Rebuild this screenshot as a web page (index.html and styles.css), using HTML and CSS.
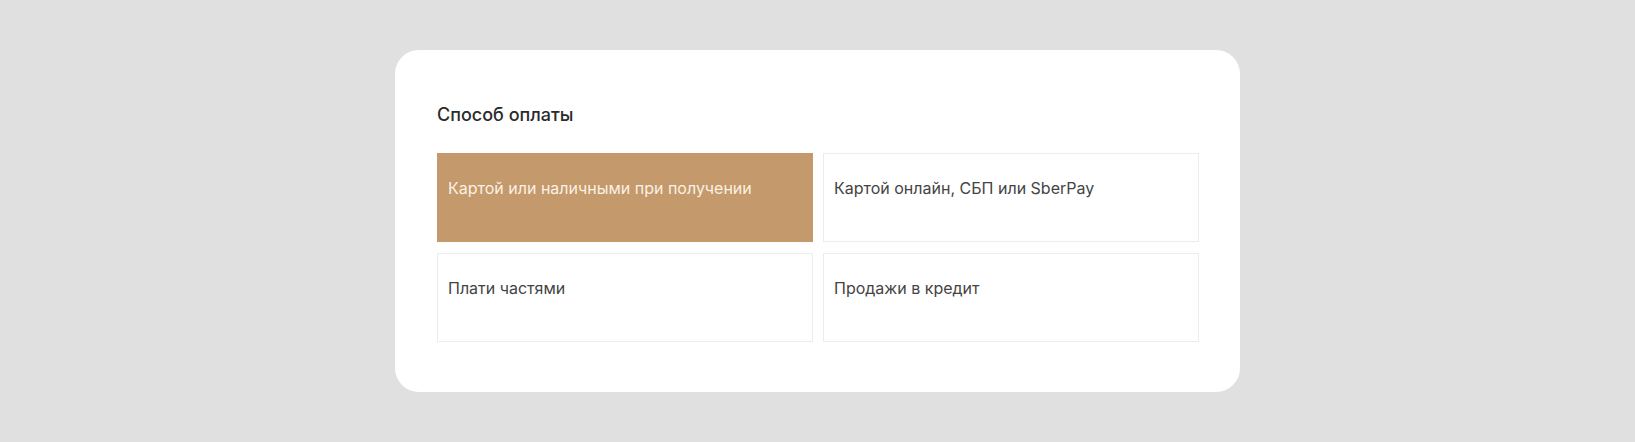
FILE: index.html
```html
<!DOCTYPE html>
<html lang="ru">
<head>
    <meta charset="UTF-8">
    <meta name="viewport" content="width=device-width, initial-scale=1.0">
    <title>Способ оплаты</title>
    <link rel="stylesheet" href="styles.css">
</head>
<body>
    <div class="payment-card">
        <h3 class="payment-title">Способ оплаты</h3>
        <div class="payment-options">
            <button class="payment-option active">Картой или наличными при получении</button>
            <button class="payment-option">Картой онлайн, СБП или SberPay</button>
            <button class="payment-option">Плати частями</button>
            <button class="payment-option">Продажи в кредит</button>
        </div>
    </div>
</body>
</html>
```

FILE: styles.css
```css
body { margin: 0; padding-top: 50px; background: #e0e0e0; font-family: Inter, "Noto Sans", sans-serif; display: flex; justify-content: center; }
.payment-card { width: 845px; box-sizing: border-box; background: #fff; border-radius: 24px; padding: 53px 41px 50px 42px; }
.payment-title { margin: 0 0 26px; font-size: 18px; line-height: 24px; font-weight: 500; color: #2b2b2b; }
.payment-options { display: grid; grid-template-columns: 1fr 1fr; grid-auto-rows: 89px; gap: 11px 10px; }
.payment-option { display: flex; align-items: flex-start; text-align: left; padding: 23px 10px; border: 1px solid #ececec; background: #fff; font-family: inherit; font-size: 16px; line-height: 22px; color: #444; cursor: pointer; }
.payment-option.active { background: #c4996b; border-color: #c4996b; color: #fbf1e4; }
```
